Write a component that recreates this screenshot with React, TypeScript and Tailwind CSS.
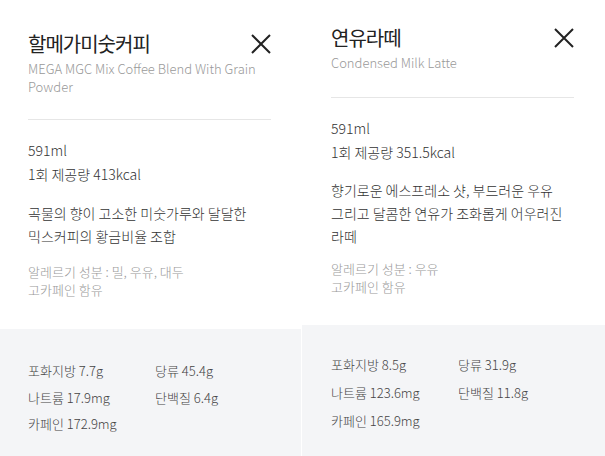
const font = { fontFamily: '"Noto Sans CJK KR", "Noto Sans", sans-serif' };

interface INutrient {
  label: string;
  value: string;
}

interface IMenuPanel {
  title: string;
  subtitle: string;
  volume: string;
  kcal: string;
  description: string[];
  allergy: string;
  nutrients: INutrient[];
  width: string;
  pad: string;
  topPad: string;
  dividerGap: string;
  descGap: string;
  allergyGap: string;
  grayPad: string;
  rowGap: string;
}

function CloseIcon() {
  return (
    <svg width="20" height="20" viewBox="0 0 20 20" className="mt-[4px] shrink-0">
      <path d="M1 1 L19 19 M19 1 L1 19" stroke="#222" strokeWidth="2" fill="none" />
    </svg>
  );
}

function MenuPanel(props: IMenuPanel) {
  return (
    <div className={`flex flex-col h-full font-light ${props.width}`}>
      <div className={`bg-white ${props.pad} ${props.topPad}`}>
        <div className="flex justify-between items-start">
          <h1 className="text-[20px] leading-[28px] text-[#222] tracking-[-1px] font-normal">
            {props.title}
          </h1>
          <CloseIcon />
        </div>
        <p className="mt-[2px] text-[13px] leading-[18px] text-[#999]">
          {props.subtitle}
        </p>
        <div className={`border-b border-[#e6e6e6] ${props.dividerGap}`} />
        <div className="mt-[18px] text-[14px] leading-[24px] text-[#333]">
          <p>{props.volume}</p>
          <p>{props.kcal}</p>
        </div>
        <div className={`text-[14px] leading-[23px] text-[#333] ${props.descGap}`}>
          {props.description.map((line) => (
            <p key={line}>{line}</p>
          ))}
        </div>
        <div className={`text-[13px] leading-[18px] text-[#999] ${props.allergyGap}`}>
          <p>{props.allergy}</p>
          <p>고카페인 함유</p>
        </div>
      </div>
      <div className={`flex-1 bg-[#f4f5f7] ${props.pad} ${props.grayPad}`}>
        <div className={`grid grid-cols-[127px_1fr] text-[13px] text-[#444] ${props.rowGap}`}>
          {props.nutrients.map((n) => (
            <p key={n.label}>
              {n.label} {n.value}
            </p>
          ))}
        </div>
      </div>
    </div>
  );
}

export default function App() {
  return (
    <div className="flex w-[605px] h-[456px] bg-white gap-px overflow-hidden" style={font}>
      <MenuPanel
        title="할메가미숫커피"
        subtitle="MEGA MGC Mix Coffee Blend With Grain Powder"
        volume="591ml"
        kcal="1회 제공량 413kcal"
        description={["곡물의 향이 고소한 미숫가루와 달달한", "믹스커피의 황금비율 조합"]}
        allergy="알레르기 성분 : 밀, 우유, 대두"
        nutrients={[
          { label: "포화지방", value: "7.7g" },
          { label: "당류", value: "45.4g" },
          { label: "나트륨", value: "17.9mg" },
          { label: "단백질", value: "6.4g" },
          { label: "카페인", value: "172.9mg" },
        ]}
        width="w-[301px]"
        pad="pl-[28px] pr-[30px]"
        topPad="pt-[30px] pb-[30px]"
        dividerGap="mt-[23px]"
        descGap="mt-[16px]"
        allergyGap="mt-[15px]"
        grayPad="pt-[29px]"
        rowGap="leading-[26.5px]"
      />
      <MenuPanel
        title="연유라떼"
        subtitle="Condensed Milk Latte"
        volume="591ml"
        kcal="1회 제공량 351.5kcal"
        description={["향기로운 에스프레소 샷, 부드러운 우유", "그리고 달콤한 연유가 조화롭게 어우러진", "라떼"]}
        allergy="알레르기 성분 : 우유"
        nutrients={[
          { label: "포화지방", value: "8.5g" },
          { label: "당류", value: "31.9g" },
          { label: "나트륨", value: "123.6mg" },
          { label: "단백질", value: "11.8g" },
          { label: "카페인", value: "165.9mg" },
        ]}
        width="flex-1"
        pad="pl-[29px] pr-[31px]"
        topPad="pt-[24px] pb-[29px]"
        dividerGap="mt-[25px]"
        descGap="mt-[15px]"
        allergyGap="mt-[12px]"
        grayPad="pt-[26px]"
        rowGap="leading-[28px]"
      />
    </div>
  );
}
